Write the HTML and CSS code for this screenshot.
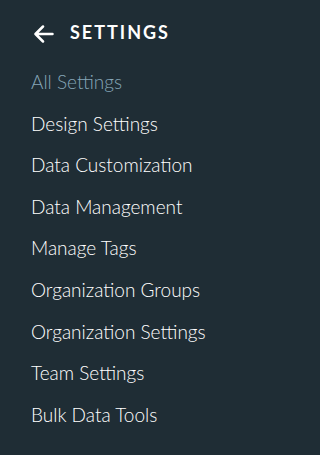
FILE: index.html
```html
<!DOCTYPE html>
<html>
<head>
<meta charset="utf-8">
<link rel="stylesheet" href="styles.css">
</head>
<body>
<nav class="sidebar">
  <div class="header">
    <svg class="back" width="20" height="18" viewBox="0 0 20 18" aria-hidden="true">
      <path d="M18.5 9 H2 M9 1.5 L1.5 9 L9 16.5" fill="none" stroke="#ffffff" stroke-width="2.5" stroke-linecap="round" stroke-linejoin="round"/>
    </svg>
    <span class="title">SETTINGS</span>
  </div>
  <ul class="menu">
    <li class="item active">All Settings</li>
    <li class="item">Design Settings</li>
    <li class="item">Data Customization</li>
    <li class="item">Data Management</li>
    <li class="item">Manage Tags</li>
    <li class="item">Organization Groups</li>
    <li class="item">Organization Settings</li>
    <li class="item">Team Settings</li>
    <li class="item">Bulk Data Tools</li>
  </ul>
</nav>
</body>
</html>
```
FILE: styles.css
```css
html, body {
  margin: 0;
  padding: 0;
  background: #1f2d35;
}
.sidebar {
  width: 249px;
  height: 455px;
  background: #1f2d35;
  font-family: Lato, "Open Sans", sans-serif;
  box-sizing: border-box;
  padding-top: 20px;
}
.header {
  display: flex;
  align-items: center;
  height: 24px;
  padding-left: 34px;
}
.back {
  display: block;
  flex: none;
  margin-top: 4px;
}
.title {
  margin-left: 16px;
  color: #ffffff;
  font-weight: 700;
  font-size: 18px;
  line-height: 20px;
  letter-spacing: 2px;
}
.menu {
  list-style: none;
  margin: 17px 0 0 0;
  padding: 0 0 0 31px;
}
.item {
  font-size: 19px;
  font-weight: 300;
  line-height: 41.6px;
  color: #ffffff;
  white-space: nowrap;
}
.item.active {
  color: #86a6b8;
}
```
